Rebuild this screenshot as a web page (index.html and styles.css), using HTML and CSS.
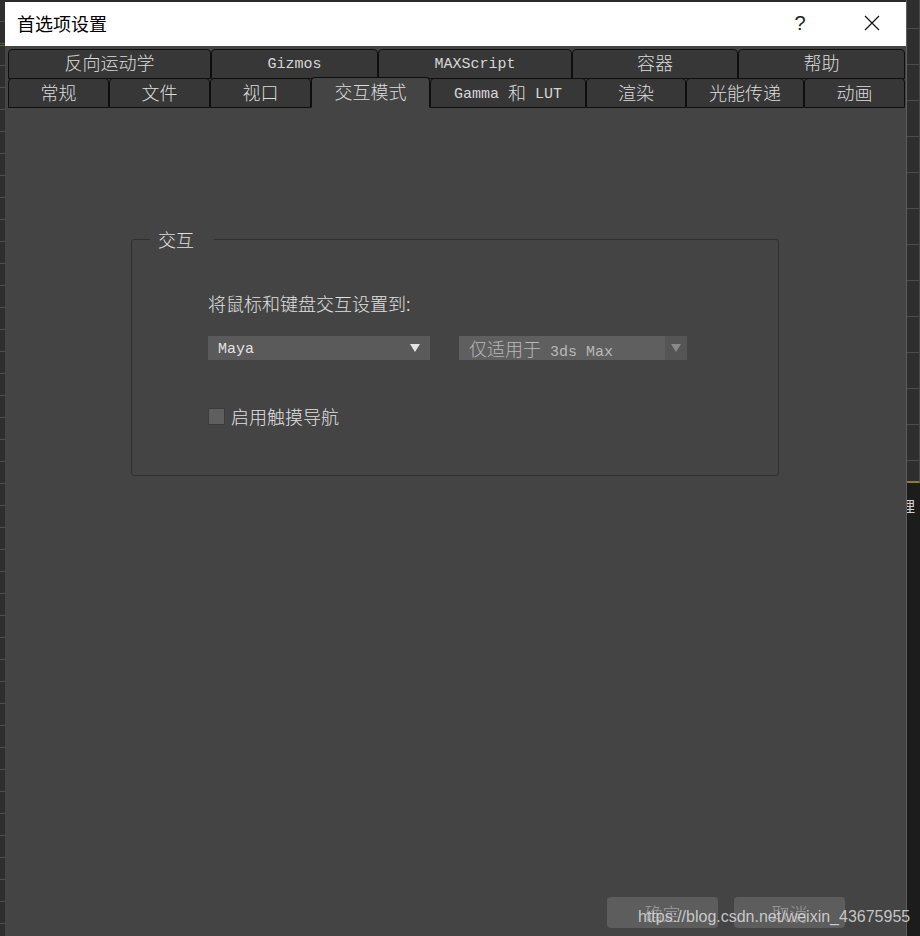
FILE: index.html
```html
<!DOCTYPE html>
<html lang="zh-CN">
<head>
<meta charset="utf-8">
<title>首选项设置</title>
<link rel="stylesheet" href="styles.css">
</head>
<body>
<div class="screen">
  <div class="left-strip"><span class="red-mark"></span></div>
  <div class="dialog">
    <header class="titlebar">
      <span class="title">首选项设置</span>
      <div class="controls">
        <span class="help">?</span>
        <span class="close"><svg width="16" height="16" viewBox="0 0 16 16"><path d="M1 1 L15 15 M15 1 L1 15" stroke="#111" stroke-width="1.2" fill="none"/></svg></span>
      </div>
    </header>
    <div class="content">
      <div class="tabs">
        <div class="tabrow row1">
          <div class="tab w203">反向运动学</div>
          <div class="tab w167"><span class="lat">Gizmos</span></div>
          <div class="tab w194"><span class="lat">MAXScript</span></div>
          <div class="tab w166">容器</div>
          <div class="tab w167">帮助</div>
        </div>
        <div class="tabrow row2">
          <div class="tab w101">常规</div>
          <div class="tab w101">文件</div>
          <div class="tab w101">视口</div>
          <div class="tab w119 active">交互模式</div>
          <div class="tab w156"><span class="lat">Gamma </span>和<span class="lat"> LUT</span></div>
          <div class="tab w100">渲染</div>
          <div class="tab w118">光能传递</div>
          <div class="tab w101">动画</div>
        </div>
      </div>
      <fieldset class="group">
        <legend class="group-title">交互</legend>
        <div class="group-body">
          <div class="label">将鼠标和键盘交互设置到:</div>
          <div class="selects">
            <div class="select primary"><span class="lat sel-lat">Maya</span><span class="arrow"></span></div>
            <div class="select disabled"><span class="sel-text">仅适用于<span class="lat"> 3ds Max</span></span><span class="arrow-box"><span class="arrow"></span></span></div>
          </div>
          <label class="check-row"><span class="checkbox"></span><span class="check-label">启用触摸导航</span></label>
        </div>
      </fieldset>
      <div class="buttons">
        <div class="btn">确定</div>
        <div class="btn">取消</div>
      </div>
    </div>
  </div>
  <div class="right-strip">
    <div class="strip-top"></div>
    <div class="strip-bottom"><span class="strip-char">理</span></div>
  </div>
  <div class="watermark">https://blog.csdn.net/weixin_43675955</div>
</div>
</body>
</html>
```
FILE: styles.css
```css
* { box-sizing: border-box; }

body {
  margin: 0;
  background: #2b2b2b;
  font-family: "Noto Sans CJK SC", "Liberation Sans", sans-serif;
}

.screen {
  position: relative;
  display: flex;
  width: 920px;
  height: 936px;
  overflow: hidden;
}

.left-strip {
  position: relative;
  width: 5px;
  flex: none;
  background: #2e2e2e repeating-linear-gradient(to bottom, transparent 0 21px, #4f4f4f 21px 22px);
}

.red-mark {
  position: absolute;
  left: 0;
  top: 45px;
  width: 5px;
  height: 1px;
  background: #c03030;
}

.dialog {
  width: 901px;
  flex: none;
  margin-top: 2px;
  display: flex;
  flex-direction: column;
  background: #444444;
}

.titlebar {
  height: 44px;
  flex: none;
  background: #ffffff;
  display: flex;
  align-items: center;
  padding: 0 19px 3px 12px;
}

.title {
  font-size: 18px;
  color: #000;
  line-height: 24px;
}

.controls {
  margin-left: auto;
  display: flex;
  align-items: center;
  gap: 42px;
}

.help {
  width: 30px;
  text-align: center;
  font-family: "Liberation Sans", sans-serif;
  font-size: 20px;
  color: #222;
  line-height: 24px;
}

.close {
  width: 30px;
  height: 24px;
  display: flex;
  align-items: center;
  justify-content: center;
}

.content {
  flex: 1;
  display: flex;
  flex-direction: column;
  padding: 3px 1px 8px 3px;
}

.tabrow {
  display: flex;
  align-items: flex-end;
}

.tab {
  height: 30px;
  flex: none;
  display: flex;
  align-items: center;
  justify-content: center;
  padding-bottom: 5px;
  background: #373737;
  border: 1px solid #0e0e0e;
  border-radius: 4px 4px 0 0;
  color: #dcdcdc;
  font-size: 18px;
  font-weight: 300;
  white-space: pre;
}

.tab .lat {
  padding-top: 6px;
}

.row2 {
  margin-top: -1px;
}

.row2 .tab {
  padding-bottom: 3px;
}

.row2 .tab.active {
  height: 31px;
  margin-top: -1px;
  background: #444444;
  border-bottom-color: #444444;
}

.lat {
  font-family: "Liberation Mono", monospace;
  font-size: 15px;
  font-weight: 400;
  white-space: pre;
  color: #d6d6d6;
}

.w100 { width: 100px; }
.w101 { width: 101px; }
.w118 { width: 118px; }
.w119 { width: 119px; }
.w156 { width: 156px; }
.w166 { width: 166px; }
.w167 { width: 167px; }
.w194 { width: 194px; }
.w203 { width: 203px; }

.group {
  margin: 119px 0 0 123px;
  width: 648px;
  padding: 0;
  border: 1px solid #2f2f2f;
  border-radius: 3px;
  min-width: 0;
}

.group-title {
  margin-left: 18px;
  padding: 0 20px 0 8px;
  font-size: 18px;
  font-weight: 300;
  line-height: 24px;
  color: #e0e0e0;
}

.group-body {
  padding: 40px 0 47px 76px;
}

.label {
  font-size: 18px;
  font-weight: 300;
  line-height: 24px;
  color: #e0e0e0;
}

.selects {
  margin-top: 21px;
  display: flex;
  gap: 29px;
}

.select {
  height: 24px;
  display: flex;
  align-items: center;
  color: #dcdcdc;
}

.select.primary {
  width: 222px;
  background: #5a5a5a;
  padding: 0 10px;
  justify-content: space-between;
}

.sel-lat {
  padding-top: 3px;
  color: #e2e2e2;
}

.select.primary .arrow {
  width: 0;
  height: 0;
  border-left: 5px solid transparent;
  border-right: 5px solid transparent;
  border-top: 8px solid #e4e4e4;
}

.select.disabled {
  width: 228px;
  background: #5f5f5f;
  color: #b9b9b9;
  padding-left: 10px;
}

.select.disabled .lat {
  color: #b9b9b9;
}

.sel-text {
  flex: 1;
  font-size: 18px;
  font-weight: 300;
  white-space: pre;
}

.arrow-box {
  width: 22px;
  height: 24px;
  background: #555555;
  display: flex;
  align-items: center;
  justify-content: center;
}

.arrow-box .arrow {
  width: 0;
  height: 0;
  border-left: 5px solid transparent;
  border-right: 5px solid transparent;
  border-top: 8px solid #8a8a8a;
}

.check-row {
  margin-top: 44px;
  height: 24px;
  display: flex;
  align-items: center;
  gap: 6px;
}

.checkbox {
  width: 17px;
  height: 17px;
  background: #5f5f5f;
  border: 1px solid #3c3c3c;
}

.check-label {
  font-size: 18px;
  font-weight: 300;
  line-height: 24px;
  color: #e0e0e0;
}

.buttons {
  margin-top: auto;
  margin-right: 60px;
  display: flex;
  justify-content: flex-end;
  gap: 16px;
}

.btn {
  width: 111px;
  height: 31px;
  background: #5d5d5d;
  border-radius: 4px;
  display: flex;
  align-items: center;
  justify-content: center;
  color: #9c9c9c;
  font-size: 18px;
  font-weight: 300;
}

.right-strip {
  width: 14px;
  flex: none;
  display: flex;
  flex-direction: column;
  border-left: 1px solid #5e5e5e;
  overflow: hidden;
}

.strip-top {
  height: 483px;
  flex: none;
  border-right: 1px solid #4a4a4a;
  background: #2e2e2e repeating-linear-gradient(to bottom, transparent 0 28px, #4c4c4c 28px 29px, transparent 29px 36px);
  border-bottom: 2px solid #8c7b35;
}

.strip-bottom {
  flex: 1;
  background: #1c1c1c;
  padding-top: 14px;
}

.strip-char {
  display: block;
  margin-left: -7px;
  font-size: 15px;
  line-height: 18px;
  color: #d0d0d0;
}

.watermark {
  position: absolute;
  left: 638px;
  top: 906px;
  font-family: "Liberation Sans", sans-serif;
  font-size: 16px;
  line-height: 22px;
  color: rgba(222, 222, 222, 0.85);
  white-space: nowrap;
}
```
